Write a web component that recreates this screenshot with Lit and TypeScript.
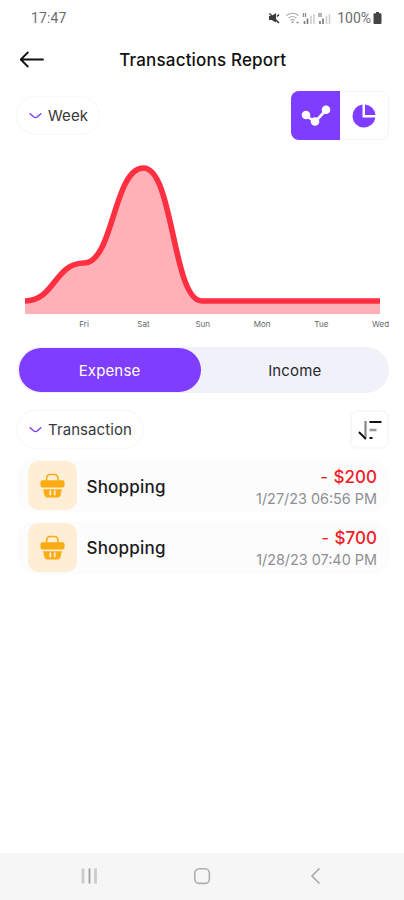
import { LitElement, html, css, svg } from "lit";
import { customElement, property } from "lit/decorators.js";

interface Transaction {
  name: string;
  amount: string;
  date: string;
}

const DAYS = ["Fri", "Sat", "Sun", "Mon", "Tue", "Wed"];

const TRANSACTIONS: Transaction[] = [
  { name: "Shopping", amount: "$200", date: "1/27/23 06:56 PM" },
  { name: "Shopping", amount: "$700", date: "1/28/23 07:40 PM" },
];

@customElement("status-bar")
class StatusBar extends LitElement {
  static styles = css`
    :host {
      display: flex;
      align-items: center;
      justify-content: space-between;
      height: 35px;
      padding: 0 22px 0 31px;
      font: 400 14px/18px Roboto, sans-serif;
      color: #6c6c6c;
    }
    .time { letter-spacing: 0.1px; }
    .right { display: flex; align-items: center; }
    .icons { display: block; margin-right: 5px; }
    .battery { display: block; margin-left: 2px; }
  `;
  render() {
    return html`
      <span class="time">17:47</span>
      <span class="right">
        <svg class="icons" width="64" height="14" viewBox="0 0 64 14" fill="none">
          <path d="M1 5h2.500L8 2v9.500L3.500 9H1z" fill="#3c3c3c" />
          <path d="M1.500 2.500l9.500 9.500M9 5.500l2-2" stroke="#3c3c3c" stroke-width="1.600" />
          <path d="M18.500 4.500q6-4.500 12 0M20.500 7q4-3 8 0M22.500 9.300q2-1.500 4 0" stroke="#aaa" stroke-width="1.200" />
          <path d="M24.500 12v-1.500M28.500 11.500h2" stroke="#888" stroke-width="1.500" />
          <path d="M35.500 2v4M37.500 2v4M51 2v4M53 2v4" stroke="#888" stroke-width="1.200" />
          <path d="M36.500 10v3M39.500 7.500v5.500M52 10v3M55 7.500v5.500" stroke="#777" stroke-width="1.600" />
          <path d="M43 5v8M46 3v10M58.500 5v8M61.500 3v10" stroke="#ccc" stroke-width="1.500" />
        </svg>
        <span>100%</span>
        <svg class="battery" width="9" height="12" viewBox="0 0 9 12">
          <path d="M3 0h3v1.200h1.500q1 0 1 1V11q0 1-1 1h-6q-1 0-1-1V2.200q0-1 1-1H3z" fill="#444" />
        </svg>
      </span>
    `;
  }
}

@customElement("spending-chart")
class SpendingChart extends LitElement {
  static styles = css`
    :host { display: block; }
    .plot { display: block; margin-left: 25px; }
    .days {
      display: grid;
      grid-template-columns: repeat(6, 59.3px);
      margin-left: 54.500px;
      padding-top: 5px;
      font: 400 8px/10px Inter, sans-serif;
      color: #666;
      text-align: center;
    }
    .day { white-space: nowrap; }
  `;
  render() {
    const curve =
      "M0 146C29.500 146 29.500 108 59 108S88.500 13 118.500 13S147.500 146 177 146H355.500";
    return html`
      <svg class="plot" width="355" height="159" viewBox="0 0 355 159">
        ${svg`
          <path d="${curve}V159.500H0Z" fill="#ffb1b7" />
          <path d=${curve} fill="none" stroke="#ff2f42" stroke-width="5.600" />
        `}
      </svg>
      <div class="days">${DAYS.map((d) => html`<span class="day">${d}</span>`)}</div>
    `;
  }
}

@customElement("drop-pill")
class DropPill extends LitElement {
  @property() label = "";
  static styles = css`
    :host {
      display: flex;
      align-items: center;
      gap: 6px;
      box-sizing: border-box;
      height: 39px;
      padding: 0 11px 0 12px;
      border: 1px solid #f7f7f8;
      border-radius: 20px;
      font: 400 15px/20px Inter, sans-serif;
      letter-spacing: 0.080px;
      color: #38383a;
    }
    .chevron { display: block; }
  `;
  render() {
    return html`
      <svg class="chevron" width="13" height="8" viewBox="0 0 13 8" fill="none">
        <path d="M1.200 1.700L4.800 5Q6.500 6.200 8.200 5L11.800 1.700" stroke="#7f3dff" stroke-width="1.500" stroke-linecap="round" />
      </svg>
      <span>${this.label}</span>
    `;
  }
}

@customElement("transaction-row")
class TransactionRow extends LitElement {
  @property({ attribute: false }) item!: Transaction;
  static styles = css`
    :host {
      display: flex;
      align-items: center;
      box-sizing: border-box;
      height: 53px;
      padding: 0 12px 0 11px;
      border-radius: 18px;
      background: #fcfcfc;
      font-family: Inter, sans-serif;
    }
    .tile {
      display: grid;
      place-items: center;
      width: 49px;
      height: 49px;
      border-radius: 11px;
      background: #fdeed5;
    }
    .name {
      flex: 1;
      margin-left: 9.500px;
      padding-top: 2px;
      font-size: 17px;
      font-weight: 500;
      letter-spacing: 0.200px;
      color: #1b1b1d;
    }
    .values { padding-top: 4px; text-align: right; }
    .amount {
      font-size: 17px;
      line-height: 22px;
      font-weight: 500;
      color: #f01d27;
    }
    .sign { margin-right: 1px; font-weight: 400; }
    .date {
      font-size: 14.400px;
      line-height: 22px;
      color: #8f8f94;
    }
  `;
  render() {
    return html`
      <span class="tile">
        <svg width="25" height="25" viewBox="0 0 26 26" fill="none">
          <path d="M6.800 8V6.500Q6.800 1.500 10.500 1.500H15Q18.800 1.500 18.800 6.500V8" stroke="#fcac12" stroke-width="1.700" />
          <rect x="0.500" y="7.500" width="25" height="7.500" rx="2" fill="#fcac12" />
          <path d="M3.300 17H22.700L21.500 22.500Q20.700 25.500 17.500 25.500H8.500Q5.300 25.500 4.500 22.500Z" fill="#fcac12" />
          <path d="M10.700 18.800v3.600M15.300 18.800v3.600" stroke="#fdeed5" stroke-width="1.900" stroke-linecap="round" />
        </svg>
      </span>
      <span class="name">${this.item.name}</span>
      <div class="values">
        <div class="amount"><span class="sign">-</span> ${this.item.amount}</div>
        <div class="date">${this.item.date}</div>
      </div>
    `;
  }
}

@customElement("app-root")
class AppRoot extends LitElement {
  static styles = css`
    :host {
      display: flex;
      flex-direction: column;
      width: 404px;
      height: 900px;
      overflow: hidden;
      background: #fff;
      font-family: Inter, sans-serif;
    }
    .header {
      display: grid;
      grid-template-columns: 60px 1fr 60px;
      align-items: center;
      height: 50px;
    }
    .back { display: block; margin-left: 19px; }
    .title {
      text-align: center;
      font-size: 17px;
      font-weight: 500;
      letter-spacing: 0.180px;
      color: #111;
      padding-left: 1.500px;
    }
    .controls {
      display: flex;
      align-items: center;
      justify-content: space-between;
      height: 49px;
      margin-top: 6px;
      padding: 0 15px 0 16px;
    }
    .views {
      display: flex;
      box-sizing: border-box;
      width: 98px;
      height: 49px;
      border: 1px solid #f6f6f8;
      border-radius: 8px;
    }
    .view { display: grid; place-items: center; flex: 1; }
    .view.active {
      flex: none;
      width: 49px;
      height: 49px;
      margin: -1px 0 0 -1px;
      background: #7f3dff;
      border-radius: 8px 0 0 8px;
    }
    .chart { margin-top: 15px; }
    .tabs {
      display: grid;
      grid-template-columns: 182px 1fr;
      box-sizing: border-box;
      height: 46px;
      margin: 18px 15px 0 17px;
      padding: 1px 0 1px 1.500px;
      border-radius: 24px;
      background: #f1f1fa;
      font-size: 15px;
      color: #29292b;
    }
    .tab { display: grid; place-items: center; border-radius: 22px; letter-spacing: 0.150px; }
    .tab.active { background: #7f3dff; color: #fff; }
    .filters {
      display: flex;
      align-items: center;
      justify-content: space-between;
      height: 39px;
      margin-top: 17px;
      padding: 0 15px 0 16px;
    }
    .sort {
      display: grid;
      place-items: center;
      box-sizing: border-box;
      width: 39px;
      height: 39px;
      border: 2px solid #f8f8f8;
      border-radius: 7px;
    }
    .list {
      display: flex;
      flex-direction: column;
      gap: 8.500px;
      flex: 1;
      padding: 10px 15px 0 17px;
    }
    .nav {
      display: flex;
      align-items: center;
      height: 47px;
      background: #f6f6f6;
    }
    .nav-icons { display: block; }
  `;
  render() {
    return html`
      <status-bar></status-bar>
      <div class="header">
        <svg class="back" width="26" height="18" viewBox="0 0 26 18" fill="none">
          <path d="M24 8.500H2M8.800 1.500L1.800 8.500L8.800 15.500" stroke="#111" stroke-width="1.800" stroke-linecap="round" stroke-linejoin="round" />
        </svg>
        <div class="title">Transactions Report</div>
      </div>
      <div class="controls">
        <drop-pill label="Week"></drop-pill>
        <div class="views">
          <div class="view active">
            <svg width="30" height="22" viewBox="0 0 30 22">
              <path d="M5 10.500L14 17L25 5" fill="none" stroke="#fff" stroke-width="2.600" />
              <circle cx="5" cy="10" r="4.300" fill="#fff" />
              <circle cx="14" cy="16.500" r="4.300" fill="#fff" />
              <circle cx="25" cy="4.800" r="4.300" fill="#fff" />
            </svg>
          </div>
          <div class="view">
            <svg width="24" height="24" viewBox="0 0 24 24">
              <path d="M10.500 0.600A11.500 11.500 0 1 0 23.400 13.500H10.500Z" fill="#7f3dff" />
              <path d="M13 0.500A11.500 11.500 0 0 1 23.500 11H13Z" fill="#7f3dff" />
            </svg>
          </div>
        </div>
      </div>
      <spending-chart class="chart"></spending-chart>
      <div class="tabs">
        <div class="tab active">Expense</div>
        <div class="tab">Income</div>
      </div>
      <div class="filters">
        <drop-pill label="Transaction"></drop-pill>
        <div class="sort">
          <svg width="24" height="20" viewBox="0 0 24 20" fill="none">
            <path d="M7.500 1V18.500" stroke="#888" stroke-width="2.200" />
            <path d="M1.500 12.500L7.300 18.500" stroke="#111" stroke-width="1.900" stroke-linecap="round" />
            <path d="M11.500 2H23.500M11.500 18H14.500" stroke="#111" stroke-width="1.900" />
            <path d="M11.500 10H18.500" stroke="#999" stroke-width="2.600" />
          </svg>
        </div>
      </div>
      <div class="list">
        ${TRANSACTIONS.map((t) => html`<transaction-row .item=${t}></transaction-row>`)}
      </div>
      <div class="nav">
        <svg class="nav-icons" width="404" height="47" viewBox="0 0 404 47" fill="none">
          <path d="M83 15.500V30.500M95.500 15.500V30.500" stroke="#cbcbcb" stroke-width="2.800" />
          <path d="M89.500 15.500V30.500" stroke="#a0a0a0" stroke-width="1.800" />
          <rect x="194.800" y="15.800" width="14.600" height="14.600" rx="4.500" stroke="#adadad" stroke-width="1.600" />
          <path d="M319.500 15.500L312 23L319.500 30.500" stroke="#a8a8a8" stroke-width="1.600" />
        </svg>
      </div>
    `;
  }
}
